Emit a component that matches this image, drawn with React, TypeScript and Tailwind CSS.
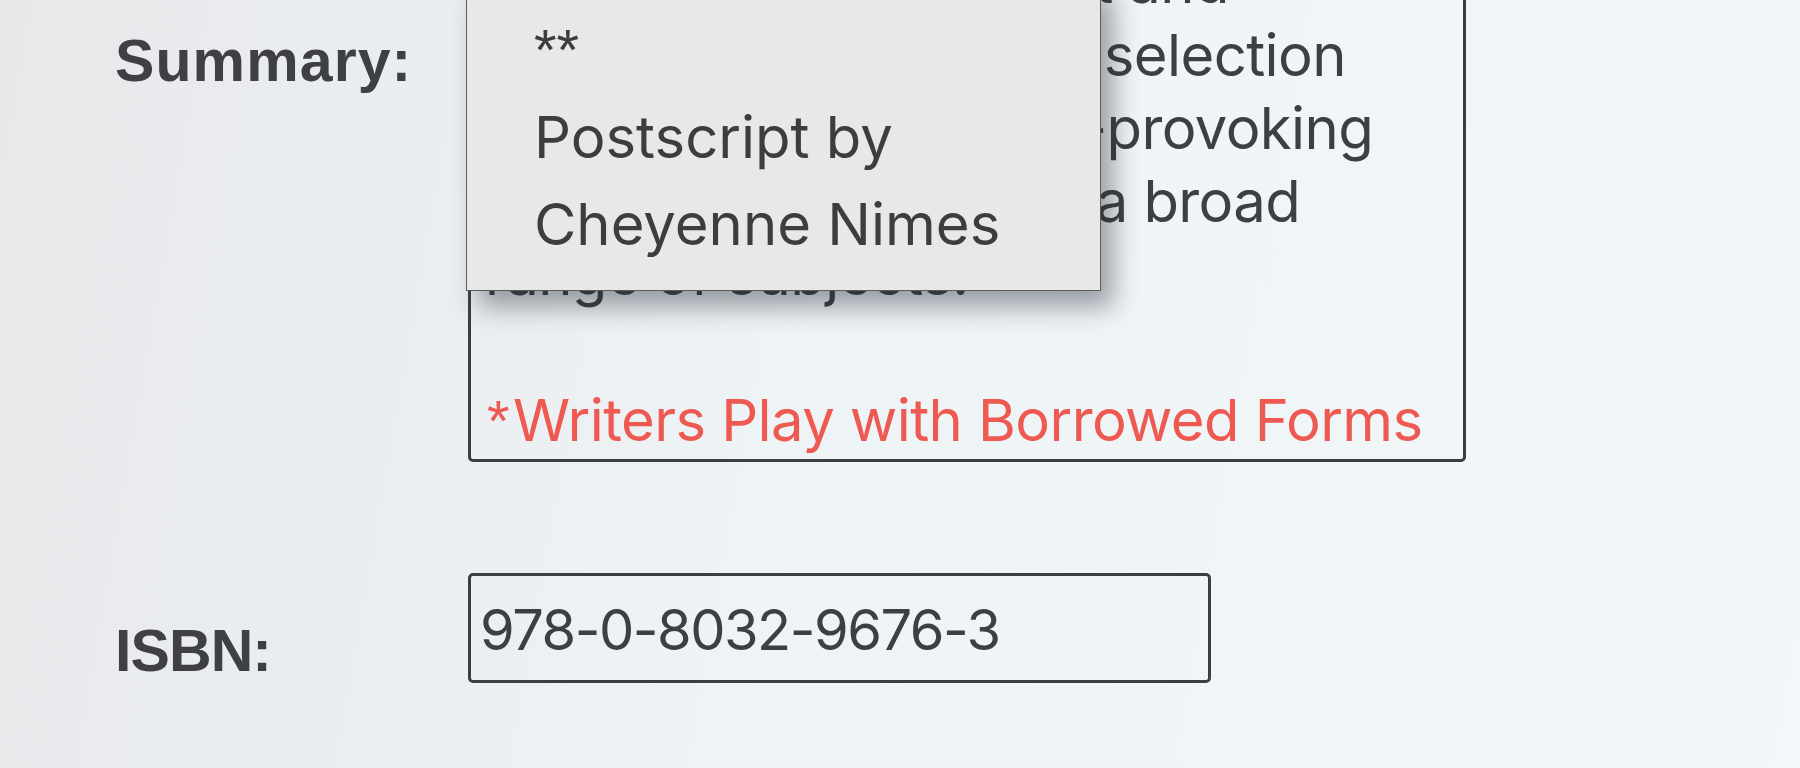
import React from 'react';

const summaryLines = [
    'Inside this lively collection of',
    'fables and essays, light and',
    'an unusual and choice selection',
    'of cogent and thought-provoking',
    'writing which explains a broad',
    'range of subjects.',
];

const menuItems = ['Postscript by', 'Cheyenne Nimes'];

const App: React.FC = () => {
    return (
        <div className="relative h-[768px] w-full overflow-hidden bg-[linear-gradient(100deg,#e7e8ea_0%,#eef3f6_45%,#f2f7fa_100%)] font-['Inter',sans-serif] text-[#3d3f43]">
            <div className="-mt-[138px] pl-[115px]">
                {/* summary row */}
                <div className="flex items-start">
                    <label className="mt-[170px] w-[353px] font-['Liberation_Sans',Arial,sans-serif] text-[59px] font-bold leading-[59px] tracking-[1.1px] text-[#3f4043]">
                        Summary:
                    </label>
                    <div className="w-[998px] rounded-[5px] border-[3px] border-[#3c3e42] pl-[14px] pr-4 pt-[8px] pb-[2px] text-[58px] leading-[73px] tracking-[-0.6px]">
                        {summaryLines.map((line, i) => (
                            <div key={i} className="whitespace-nowrap">{line}</div>
                        ))}
                        <div>&nbsp;</div>
                        <div className="whitespace-nowrap text-[#ee5a52]">
                            <span className="ml-[2px] mr-[4px] font-['Liberation_Sans',Arial,sans-serif]">*</span>Writers Play with Borrowed Forms
                        </div>
                    </div>
                </div>

                {/* isbn row */}
                <div className="mt-[111px] flex items-start">
                    <label className="mt-[49px] w-[353px] font-['Liberation_Sans',Arial,sans-serif] text-[59px] font-bold leading-[59px] tracking-[-0.9px] text-[#3f4043]">
                        ISBN:
                    </label>
                    <div className="h-[110px] w-[743px] rounded-[5px] border-[3px] border-[#3c3e42] pl-[9px] pt-[4px] text-[56px] leading-[100px] tracking-[-1.5px]">
                        978-0-8032-9676-3
                    </div>
                </div>
            </div>

            {/* open autocomplete menu */}
            <div className="absolute left-[466px] top-[-20px] w-[635px] border border-[#5c5c5c] bg-[#e8e8e8] pl-[67px] pt-[25px] pb-[21px] text-[58px] leading-[87.5px] text-[#3d3d3d] shadow-[12px_16px_24px_rgba(30,40,50,0.42)]">
                <div className="whitespace-nowrap font-['Liberation_Sans',Arial,sans-serif]">**</div>
                {menuItems.map((item) => (
                    <div key={item} className="whitespace-nowrap">{item}</div>
                ))}
            </div>
        </div>
    );
};

export default App;
